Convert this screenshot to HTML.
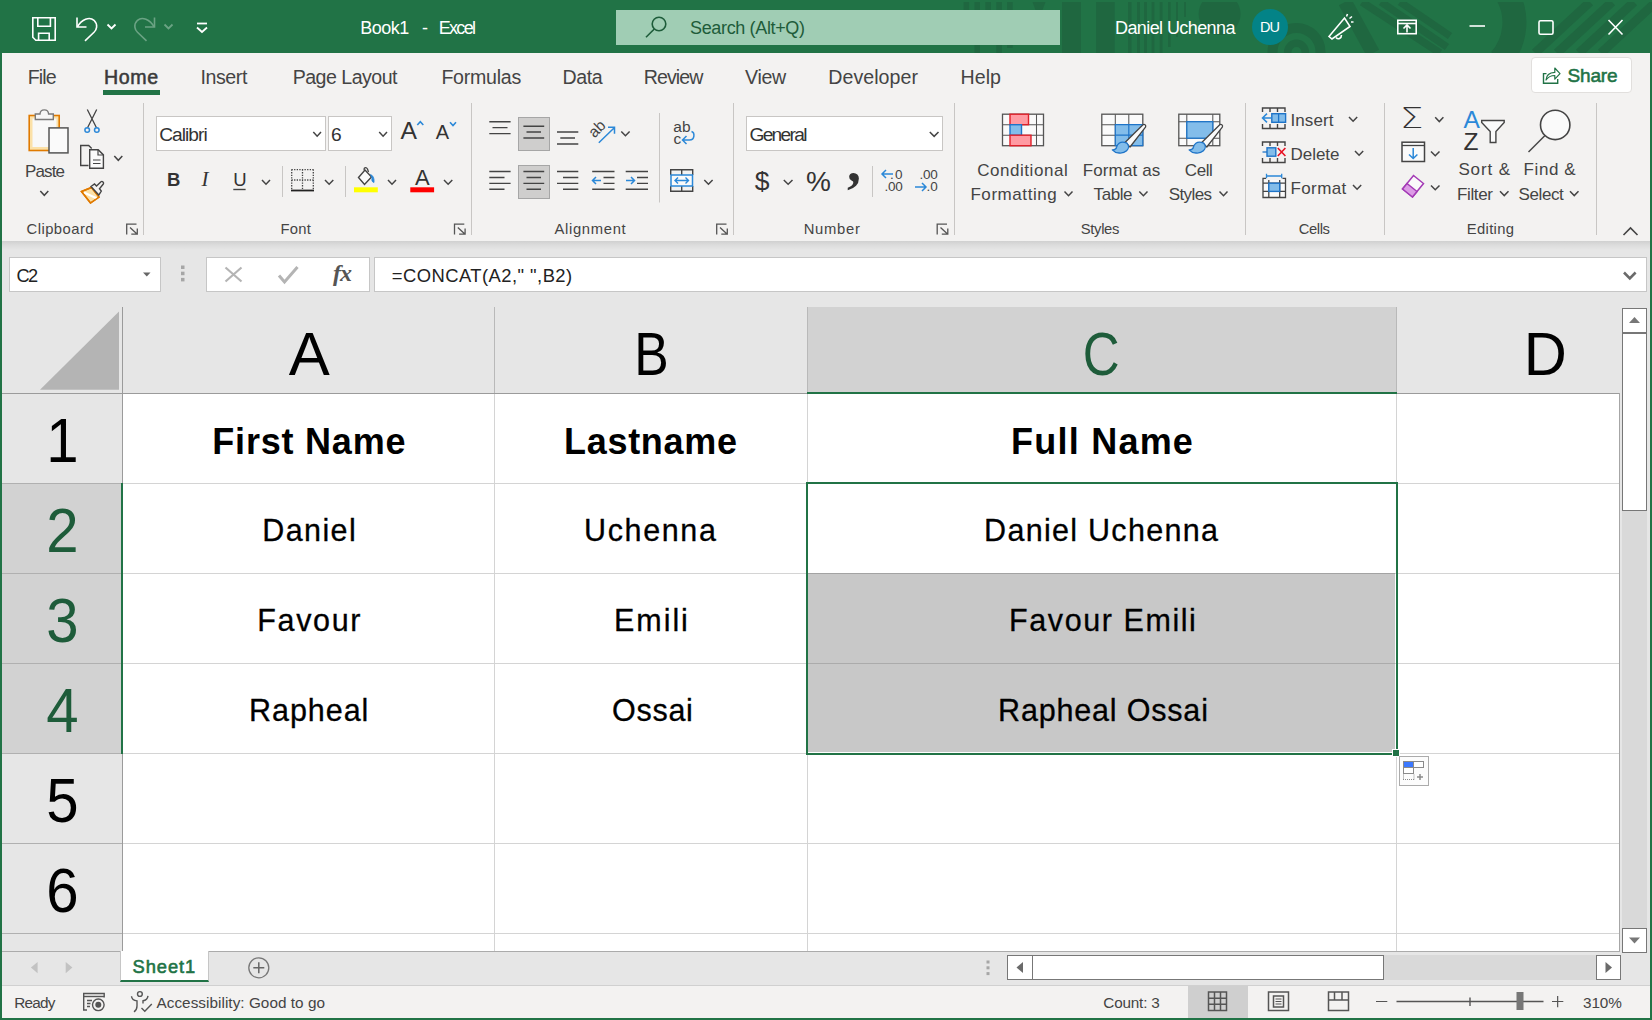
<!DOCTYPE html>
<html><head><meta charset="utf-8"><title>Book1 - Excel</title>
<style>
*{box-sizing:border-box;margin:0;padding:0}
html,body{width:1652px;height:1020px;overflow:hidden;background:#fff}
body{font-family:"Liberation Sans",sans-serif;color:#444;position:relative}
.abs,#app *{position:absolute}
#app{position:absolute;left:0;top:0;width:1652px;height:1020px;background:#217346;overflow:hidden}
.t{white-space:nowrap;line-height:1}
svg{overflow:visible}
/* title bar */
#title{left:0;top:0;width:1652px;height:53px;background:#217346}
#search{left:616px;top:10px;width:444px;height:35px;background:#a0cdb4}
/* tabs + ribbon */
#ribbon{left:2px;top:53px;width:1648px;height:188px;background:#f3f2f1}
#shadow{left:2px;top:241px;width:1648px;height:9px;background:linear-gradient(#d0d0d0,#dcdcdc 45%,#e6e6e6)}
.tab{font-size:19.5px;color:#444;top:24px}
.gl{font-size:15.5px;color:#444;top:170px}
.sep{width:1px;background:#c8c6c4;top:50px;height:132px}
/* formula */
#fbar{left:2px;top:250px;width:1648px;height:58px;background:#e6e6e6}
/* grid */
#grid{left:2px;top:307px;width:1617px;height:644px;background:#fff;overflow:hidden}
.vl{width:1px;background:#d4d4d4;top:0;height:644px}
.hl{height:1px;background:#d4d4d4;left:120px;width:1497px}
.ch{top:0;height:86px;background:#e6e6e6;font-size:57px;color:#000;text-align:center;line-height:92px}
.rh{left:0;width:120px;height:90px;background:#e6e6e6;font-size:57px;color:#000;text-align:center;line-height:96px;border-bottom:1px solid #b0b0b0}
.c{height:90px;text-align:center;font-size:33.5px;color:#000;line-height:94px;white-space:nowrap}
.b{font-weight:bold;font-size:35px}
/* bottom */
#tabs{left:2px;top:951px;width:1648px;height:34px;background:#e6e6e6}
#status{left:2px;top:985px;width:1648px;height:33px;background:#f3f2f1;font-size:16px;color:#444}
</style></head><body>
<div id="app">
<div id="title">
<svg style="left:0;top:0;overflow:hidden" width="1652" height="53" viewBox="0 0 1652 53">
<g fill="#1f6740">
<rect x="963.600" y="2" width="5.500" height="8"/><rect x="974.500" y="2" width="5.500" height="8"/><rect x="985.400" y="2" width="5.500" height="8"/><rect x="996.300" y="2" width="5.500" height="8"/><rect x="1007.200" y="2" width="5.500" height="8"/>
<path d="M1032.500 2h13l-3 8h-7z"/>
<rect x="974.500" y="45" width="5.500" height="8"/><rect x="996.300" y="45" width="5.500" height="8"/><rect x="1007.200" y="45" width="5.500" height="3"/>
<rect x="1062" y="2" width="19" height="51"/>
<rect x="1096.200" y="2" width="18.500" height="51"/>
<rect x="1128" y="2" width="3.500" height="51"/><rect x="1137" y="2" width="3" height="51"/><rect x="1144" y="2" width="3" height="51"/><rect x="1151.600" y="2" width="2.800" height="51"/><rect x="1159.700" y="2" width="2.800" height="51"/><rect x="1168" y="2" width="2.600" height="45"/><rect x="1176" y="2" width="2" height="35"/><rect x="1184.200" y="2" width="1.800" height="15"/>
<circle cx="1219.600" cy="14" r="21"/>
</g>
<g fill="none" stroke="#1f6740">
<circle cx="1296.500" cy="52" r="8.800" stroke-width="7.500"/>
<circle cx="1296.500" cy="52" r="24" stroke-width="10"/>
<path d="M1506.800 -6A56.400 56.400 0 0 1 1500 60" stroke-width="24"/>
<path d="M1345 2l28 51" stroke-width="14"/>
<path d="M1362 2l78 51M1381 2l66 45M1400 2l50 34" stroke-width="7.500"/>
<path d="M1590 2l-55 51M1612 2l-55 51M1634 2l-55 51M1656 2l-55 51" stroke-width="9"/>
</g>
<rect x="0" y="0" width="1652" height="2" fill="#217346"/>
<!-- qat icons -->
<g fill="none" stroke="#fff" stroke-width="1.6">
<path d="M32.8 17.8h22.4v22.4h-19.4l-3-3z"/><path d="M37.8 17.8v8.4h12.6v-8.4M38.6 40v-6.8h10.6v6.8"/>
<path d="M77 17.5v9.5h9.5"/><path d="M77.5 26.8c4-7.5 12-10.5 16.500-6.500 4.500 4.500 2.500 9.500 0 12l-9 8.500"/>
<path d="M107.500 24.500l4 4 4-4" stroke-width="1.800"/>
<path d="M197 23.500h10" stroke-width="1.800"/><path d="M197 27.500l5 4.500 5-4.500" stroke-width="1.800"/>
</g>
<g fill="none" stroke="#6ba384" stroke-width="1.6">
<path d="M154.500 17.500v9.500h-9.500"/><path d="M154 26.800c-4-7.500-12-10.500-16.500-6.500-4.500 4.500-2.500 9.500 0 12l9 8.500"/>
<path d="M164.500 24.500l4 4 4-4" stroke-width="1.800"/>
</g>
<!-- search -->
<rect x="616" y="10" width="444" height="35" fill="#a0cdb4"/>
<g fill="none" stroke="#1e5c3a" stroke-width="1.6"><circle cx="659" cy="24" r="6.800"/><path d="M654.300 29l-8.300 8.300"/></g>
<!-- avatar -->
<circle cx="1270" cy="27" r="18" fill="#038387"/>
<!-- window icons -->
<g fill="none" stroke="#fff" stroke-width="1.600">
<path d="M1329 36.500l15.500-18.500 5.500 8.500-18 12.500z"/><path d="M1336 37.500c2 2.500 5.500 1 5.500-2.500"/><path d="M1346.500 16.500l1-2.500M1349.500 18.500l2.500-2M1351 22h2.500"/>
<rect x="1397.800" y="20.300" width="18.400" height="13.400"/><path d="M1397.800 23.500h18.400" /><path d="M1407 32.500v-7M1403.500 28.500l3.500-3.500 3.500 3.500"/>
<path d="M1469.500 26h15.500"/>
<rect x="1539" y="20.800" width="14" height="13.400" rx="1.500"/>
<path d="M1608.500 20l14 14.500M1622.500 20l-14 14.500"/>
</g>
</svg>
<div class="t" style="left:360.30px;top:19.00px;font-size:18px;color:#fff;letter-spacing:-0.533px;">Book1</div>
<div class="t" style="left:421.90px;top:19.00px;font-size:18px;color:#fff;">-</div>
<div class="t" style="left:438.70px;top:19.00px;font-size:18px;color:#fff;letter-spacing:-1.677px;">Excel</div>
<div class="t" style="left:690.00px;top:19.00px;font-size:18px;color:#1e5c3a;letter-spacing:-0.349px;">Search (Alt+Q)</div>
<div class="t" style="left:1115.00px;top:19.00px;font-size:18px;color:#fff;letter-spacing:-0.585px;">Daniel Uchenna</div>
<div class="t" style="left:1260.00px;top:20.00px;font-size:14.5px;color:#fff;letter-spacing:-0.938px;">DU</div>
</div>
<div id="ribbon"></div>
<div id="shadow"></div>
<div style="left:1531px;top:57px;width:101px;height:36px;background:#fff;border:1px solid #e1dfdd;border-radius:4px"></div>
<div style="left:103px;top:90px;width:57px;height:5px;background:#217346"></div>
<div class="t" style="left:27.70px;top:68.00px;font-size:19.6px;color:#444;letter-spacing:-0.859px;">File</div>
<div class="t" style="left:200.50px;top:68.00px;font-size:19.6px;color:#444;letter-spacing:-0.424px;">Insert</div>
<div class="t" style="left:292.70px;top:68.00px;font-size:19.6px;color:#444;letter-spacing:-0.527px;">Page Layout</div>
<div class="t" style="left:441.40px;top:68.00px;font-size:19.6px;color:#444;letter-spacing:-0.256px;">Formulas</div>
<div class="t" style="left:562.60px;top:68.00px;font-size:19.6px;color:#444;letter-spacing:-0.405px;">Data</div>
<div class="t" style="left:643.70px;top:68.00px;font-size:19.6px;color:#444;letter-spacing:-0.925px;">Review</div>
<div class="t" style="left:745.00px;top:68.00px;font-size:19.6px;color:#444;letter-spacing:-0.293px;">View</div>
<div class="t" style="left:828.30px;top:68.00px;font-size:19.6px;color:#444;letter-spacing:0.045px;">Developer</div>
<div class="t" style="left:960.40px;top:68.00px;font-size:19.6px;color:#444;letter-spacing:0.094px;">Help</div>
<div class="t" style="left:103.90px;top:68.00px;font-size:19.6px;color:#3a3a3a;letter-spacing:0.702px;-webkit-text-stroke:0.55px #3a3a3a;">Home</div>
<div class="t" style="left:1567.50px;top:66.00px;font-size:19px;color:#217346;letter-spacing:-0.173px;-webkit-text-stroke:0.55px #217346;">Share</div>
<div style="left:143px;top:103px;width:1px;height:132px;background:#c8c6c4"></div>
<div style="left:471px;top:103px;width:1px;height:132px;background:#c8c6c4"></div>
<div style="left:733px;top:103px;width:1px;height:132px;background:#c8c6c4"></div>
<div style="left:954px;top:103px;width:1px;height:132px;background:#c8c6c4"></div>
<div style="left:1245px;top:103px;width:1px;height:132px;background:#c8c6c4"></div>
<div style="left:1384px;top:103px;width:1px;height:132px;background:#c8c6c4"></div>
<div style="left:1596px;top:103px;width:1px;height:132px;background:#c8c6c4"></div>
<div class="t" style="left:26.60px;top:222.00px;font-size:14.8px;color:#444;letter-spacing:0.445px;">Clipboard</div>
<div class="t" style="left:280.40px;top:222.00px;font-size:14.8px;color:#444;letter-spacing:0.328px;">Font</div>
<div class="t" style="left:554.50px;top:222.00px;font-size:14.8px;color:#444;letter-spacing:0.673px;">Alignment</div>
<div class="t" style="left:803.70px;top:222.00px;font-size:14.8px;color:#444;letter-spacing:0.731px;">Number</div>
<div class="t" style="left:1080.80px;top:222.00px;font-size:14.8px;color:#444;letter-spacing:-0.340px;">Styles</div>
<div class="t" style="left:1298.70px;top:222.00px;font-size:14.8px;color:#444;letter-spacing:-0.400px;">Cells</div>
<div class="t" style="left:1466.80px;top:222.00px;font-size:14.8px;color:#444;letter-spacing:0.324px;">Editing</div>
<div style="left:156px;top:116px;width:170px;height:35px;background:#fff;border:1px solid #c8c6c4"></div>
<div style="left:328px;top:116px;width:64px;height:35px;background:#fff;border:1px solid #c8c6c4"></div>
<div style="left:746px;top:116px;width:197px;height:35px;background:#fff;border:1px solid #c8c6c4"></div>
<div class="t" style="left:159.20px;top:125.00px;font-size:19.2px;color:#333;letter-spacing:-0.985px;">Calibri</div>
<div class="t" style="left:331.00px;top:125.00px;font-size:19.2px;color:#333;">6</div>
<div class="t" style="left:749.40px;top:125.00px;font-size:19.2px;color:#333;letter-spacing:-1.686px;">General</div>
<div style="left:518px;top:117px;width:32px;height:34px;background:#cfcecd;border:1px solid #a6a6a6"></div>
<div style="left:518px;top:165px;width:32px;height:34px;background:#cfcecd;border:1px solid #a6a6a6"></div>
<div class="t" style="left:25.00px;top:163.00px;font-size:17px;color:#444;letter-spacing:-0.867px;">Paste</div>
<div class="t" style="left:977.20px;top:162.00px;font-size:17px;color:#444;letter-spacing:0.545px;">Conditional</div>
<div class="t" style="left:970.40px;top:186.00px;font-size:17px;color:#444;letter-spacing:0.573px;">Formatting</div>
<div class="t" style="left:1082.70px;top:162.00px;font-size:17px;color:#444;letter-spacing:0.135px;">Format as</div>
<div class="t" style="left:1093.60px;top:186.00px;font-size:17px;color:#444;letter-spacing:-0.437px;">Table</div>
<div class="t" style="left:1184.80px;top:162.00px;font-size:17px;color:#444;letter-spacing:-0.397px;">Cell</div>
<div class="t" style="left:1168.70px;top:186.00px;font-size:17px;color:#444;letter-spacing:-0.598px;">Styles</div>
<div class="t" style="left:1290.50px;top:112.00px;font-size:17px;color:#444;letter-spacing:0.097px;">Insert</div>
<div class="t" style="left:1290.50px;top:146.00px;font-size:17px;color:#444;letter-spacing:-0.029px;">Delete</div>
<div class="t" style="left:1290.50px;top:180.00px;font-size:17px;color:#444;letter-spacing:0.392px;">Format</div>
<div class="t" style="left:1458.40px;top:161.00px;font-size:17px;color:#444;letter-spacing:0.871px;">Sort &amp;</div>
<div class="t" style="left:1457.00px;top:186.00px;font-size:17px;color:#444;letter-spacing:-0.355px;">Filter</div>
<div class="t" style="left:1523.60px;top:161.00px;font-size:17px;color:#444;letter-spacing:0.594px;">Find &amp;</div>
<div class="t" style="left:1518.50px;top:186.00px;font-size:17px;color:#444;letter-spacing:-0.389px;">Select</div>
<div class="t" style="left:167.00px;top:171.00px;font-size:18.5px;color:#333;font-weight:bold;">B</div>
<div class="t" style="left:201.5px;top:168.5px;font-size:21px;color:#333;font-style:italic;font-family:'Liberation Serif',serif">I</div>
<div class="t" style="left:233.30px;top:171.00px;font-size:18.5px;color:#333;">U</div>
<div class="t" style="left:400.40px;top:119.00px;font-size:24.7px;color:#333;">A</div>
<div class="t" style="left:435.80px;top:122.00px;font-size:20px;color:#333;">A</div>
<div class="t" style="left:415.00px;top:167.00px;font-size:22px;color:#333;">A</div>
<div class="t" style="left:754.80px;top:168.00px;font-size:26.5px;color:#333;">$</div>
<div class="t" style="left:806.00px;top:168.00px;font-size:28px;color:#333;">%</div>
<div class="t" style="left:847px;top:133.5px;font-size:56px;color:#333;font-weight:bold;font-family:'Liberation Serif',serif">,</div>
<div class="t" style="left:1463.50px;top:108.00px;font-size:24.5px;color:#2b88d8;">A</div>
<div class="t" style="left:1463.50px;top:130.00px;font-size:24.5px;color:#333;">Z</div>
<div class="t" style="left:1400px;top:104px;font-size:29px;color:#333;font-family:'DejaVu Sans Light','DejaVu Sans','Liberation Sans',sans-serif;font-weight:200;transform:scaleX(1.28);transform-origin:0 0">Σ</div>
<svg style="left:0;top:0" width="1652" height="250" viewBox="0 0 1652 250">
<g fill="none" stroke="#217346" stroke-width="1.400"><path d="M1546.500 73.600h-3v9.700h14.200v-4.300"/><path d="M1546 80c0.300-4.800 3.600-7.400 8.800-7.600v-4.400l5.200 5.600-5.200 5.600v-3.700c-3.800 0-6.600 1.200-8.800 4.500z" stroke-width="1.200" stroke-linejoin="round"/></g>
<rect x="29.200" y="115.500" width="30" height="35" fill="#fbe1a8" stroke="#e07a00" stroke-width="1.600"/>
<rect x="32.500" y="118.500" width="24" height="28.500" fill="#f8f8f8"/>
<path d="M35.300 119.500v-5.500h4.700c0.300-5.500 8.300-5.500 8.600 0h4.700v5.500z" fill="#f6f6f6" stroke="#7a7a7a" stroke-width="1.400"/>
<rect x="49" y="127.900" width="19" height="25" fill="#fafafa" stroke="#555" stroke-width="1.500"/>
<path d="M40.3 191L44.3 195.3L48.3 191" fill="none" stroke="#444" stroke-width="1.5"/>
<path d="M87.300 109.500l9.300 18.500M96.700 109.500l-9.300 18.500" stroke="#444" stroke-width="1.300" fill="none"/>
<circle cx="87.200" cy="130" r="2.300" fill="none" stroke="#2b88d8" stroke-width="1.500"/><circle cx="96.800" cy="130" r="2.300" fill="none" stroke="#2b88d8" stroke-width="1.500"/>
<path d="M88.500 165.500h-7.800v-20h8l3 3" fill="none" stroke="#444" stroke-width="1.400"/>
<path d="M89.700 149.700h8.500l5.200 5.200v13.300h-13.700z" fill="#fafafa" stroke="#444" stroke-width="1.400"/><path d="M98 150v5h5" fill="none" stroke="#444" stroke-width="1.200"/><path d="M93 160h7.500M93 163.500h7.500" stroke="#444" stroke-width="1.200"/>
<path d="M114.3 156L118.3 160.3L122.3 156" fill="none" stroke="#444" stroke-width="1.5"/>
<path d="M81.500 191.500l10-4 7.500 9.500-8.500 6z" fill="#fbe1a8" stroke="#e07a00" stroke-width="1.500"/><path d="M84 192.500l13 6" stroke="#fff" stroke-width="2"/><path d="M81.500 191.500l10-4 7.500 9.500-8.500 6z" fill="none" stroke="#e07a00" stroke-width="1.500"/>
<path d="M91 186.500l3.500-2.500 2 2 4.500-4.300c1.300-1 3.300 1 2.300 2.300l-3.800 4.700 1.800 2.300-2.500 4z" fill="#f3f2f1" stroke="#444" stroke-width="1.400"/>
<path d="M126.7 234.4V224.1H136.5" fill="none" stroke="#555" stroke-width="1.3"/><path d="M130 227.4L137.3 234.20000000000002M137.3 228.4V234.20000000000002H131.3" fill="none" stroke="#555" stroke-width="1.3"/>
<path d="M313.3 132L317.15 136.2L321 132" fill="none" stroke="#444" stroke-width="1.5"/>
<path d="M379.2 132L383.1 136.2L387 132" fill="none" stroke="#444" stroke-width="1.5"/>
<path d="M417.300 125l3-3.300 3 3.300" fill="none" stroke="#2b88d8" stroke-width="1.600"/><path d="M450 122.300l3 3.300 3-3.300" fill="none" stroke="#2b88d8" stroke-width="1.600"/>
<path d="M233.300 189.500h12.300" stroke="#444" stroke-width="1.400"/>
<path d="M262 180L266.0 184.2L270 180" fill="none" stroke="#444" stroke-width="1.5"/>
<path d="M282.500 166v31M345.500 166v31" stroke="#c8c6c4"/>
<g stroke="#444" stroke-width="1.300" stroke-dasharray="1.300 1.300" fill="none"><path d="M291.500 169.700h22M291.700 169.500v20M313.300 169.500v20M302.500 169.500v20M291.500 180h22"/></g><path d="M291 190.500h23" stroke="#222" stroke-width="1.800"/>
<path d="M325 180L329.15 184.2L333.3 180" fill="none" stroke="#444" stroke-width="1.5"/>
<rect x="354" y="187.300" width="23.800" height="5" fill="#ffff00"/>
<path d="M358.500 177.500l6.500-7.500 6.500 7-7 7.500z" fill="#fafafa" stroke="#444" stroke-width="1.400"/><path d="M364.500 170.500c-1.500-2.500 1.500-4 3-1.500l1 3" fill="none" stroke="#444" stroke-width="1.300"/>
<path d="M370.500 174.500c2.500 1 4 3.500 3.500 8-2-0.500-2.500-2-2-4.500z" fill="#2b88d8" stroke="#2b88d8" stroke-width="0.800"/>
<path d="M388 180L392.0 184.2L396 180" fill="none" stroke="#444" stroke-width="1.5"/>
<rect x="410.300" y="187.300" width="23.800" height="5" fill="#ff0000"/>
<path d="M444 180L448.15 184.2L452.3 180" fill="none" stroke="#444" stroke-width="1.5"/>
<path d="M454.5 234.4V224.1H464.3" fill="none" stroke="#555" stroke-width="1.3"/><path d="M457.8 227.4L465.1 234.20000000000002M465.1 228.4V234.20000000000002H459.1" fill="none" stroke="#555" stroke-width="1.3"/>
<path d="M489.3 121.7H510.6M492.5 127.6H507.5M489.3 133.6H510.6" stroke="#444" stroke-width="1.4" fill="none"/>
<path d="M523.4 126.2H544.2M526.5 132H541M523.4 138H544.2" stroke="#444" stroke-width="1.4" fill="none"/>
<path d="M557 132H578.3M560.3 138H575M557 144H578.3" stroke="#444" stroke-width="1.4" fill="none"/>
<path d="M598.800 142.800l15.500-15M608 127.300h6.500v6.500" fill="none" stroke="#2b88d8" stroke-width="1.500"/>
<text x="0" y="0" transform="translate(594.500 138.500) rotate(-45)" font-size="15.500" fill="#444" font-family="Liberation Sans, sans-serif">ab</text>
<path d="M621.3 131.5L625.45 135.7L629.6 131.5" fill="none" stroke="#444" stroke-width="1.5"/>
<path d="M659.500 113v89.500M872.500 166v31" stroke="#c8c6c4"/>
<text x="673.300" y="132.300" font-size="15.500" fill="#444" font-family="Liberation Sans, sans-serif">ab</text><text x="673.600" y="144" font-size="15.500" fill="#444" font-family="Liberation Sans, sans-serif">c</text>
<path d="M691.500 131.500c3.500 1 3.500 8.500-2 8.500h-6.500M686.500 136l-4 4 4 4" fill="none" stroke="#2b88d8" stroke-width="1.500"/>
<path d="M489.3 171.5H510.6M489.3 177.5H504.5M489.3 183.4H510.6M489.3 189.3H504.5" stroke="#444" stroke-width="1.4" fill="none"/>
<path d="M523.4 171.5H544.2M526.5 177.5H541M523.4 183.4H544.2M526.5 189.3H541" stroke="#444" stroke-width="1.4" fill="none"/>
<path d="M557 171.5H578.3M563 177.5H578.3M557 183.4H578.3M563 189.3H578.3" stroke="#444" stroke-width="1.4" fill="none"/>
<path d="M592.2 171.5H614.5M603.5 177.5H614.5M603.5 183.4H614.5M592.2 189.3H614.5" stroke="#444" stroke-width="1.4" fill="none"/>
<path d="M601 180.500h-8.500M596 177l-3.500 3.500 3.500 3.500" fill="none" stroke="#2b88d8" stroke-width="1.500"/>
<path d="M625.7 171.5H648M637 177.5H648M637 183.4H648M625.7 189.3H648" stroke="#444" stroke-width="1.4" fill="none"/>
<path d="M626 180.500h8.500M631 177l3.500 3.500-3.500 3.500" fill="none" stroke="#2b88d8" stroke-width="1.500"/>
<path d="M670.700 175v-5.300h22v5.300M670.700 186v5.300h22v-5.300M681.700 169.700v5.300M681.700 186v5.300" fill="none" stroke="#444" stroke-width="1.400"/>
<rect x="671" y="175" width="21.500" height="11" fill="#fafafa" stroke="#2b88d8" stroke-width="1.500"/><path d="M675 180.500h13.500M678 177.500l-3 3 3 3M685.500 177.500l3 3-3 3" fill="none" stroke="#2b88d8" stroke-width="1.400"/>
<path d="M704.3 180L708.45 184.2L712.6 180" fill="none" stroke="#444" stroke-width="1.5"/>
<path d="M716.7 234.4V224.1H726.5" fill="none" stroke="#555" stroke-width="1.3"/><path d="M720 227.4L727.3 234.20000000000002M727.3 228.4V234.20000000000002H721.3" fill="none" stroke="#555" stroke-width="1.3"/>
<path d="M929.8 132L934.15 136.4L938.5 132" fill="none" stroke="#444" stroke-width="1.5"/>
<path d="M783.8 180L788.15 184.2L792.5 180" fill="none" stroke="#444" stroke-width="1.5"/>
<path d="M893 174h-11M886 170l-4 4 4 4" fill="none" stroke="#2b88d8" stroke-width="1.500"/>
<text x="895" y="178.800" font-size="13.500" fill="#444" font-family="Liberation Sans, sans-serif">0</text><text x="884.500" y="190.800" font-size="13.500" fill="#444" font-family="Liberation Sans, sans-serif" letter-spacing="-0.300">.00</text><text x="890" y="179" font-size="13.500" fill="#444" font-family="Liberation Sans, sans-serif">.</text>
<text x="919.500" y="178.800" font-size="13.500" fill="#444" font-family="Liberation Sans, sans-serif" letter-spacing="-0.300">.00</text><text x="926.500" y="190.800" font-size="13.500" fill="#444" font-family="Liberation Sans, sans-serif">.0</text>
<path d="M915 187h11M922 183l4 4-4 4" fill="none" stroke="#2b88d8" stroke-width="1.500"/>
<path d="M937.2 234.4V224.1H947.0" fill="none" stroke="#555" stroke-width="1.3"/><path d="M940.5 227.4L947.8 234.20000000000002M947.8 228.4V234.20000000000002H941.8" fill="none" stroke="#555" stroke-width="1.3"/>
<rect x="1002.5" y="114.2" width="41" height="31.5" fill="#fafafa" stroke="#555" stroke-width="1.3"/><path d="M1010.5 114.2v31.5M1036.5 114.2v31.5M1002.5 124.7h41M1002.5 135.2h41" stroke="#555" stroke-width="1.04" fill="none"/>
<rect x="1010" y="114.200" width="18.500" height="10.500" fill="#ff9aa2" stroke="#e0202a" stroke-width="1.400"/>
<rect x="1010" y="124.700" width="11.500" height="10.500" fill="#83bdea" stroke="#1e74c8" stroke-width="1.400"/>
<rect x="1010" y="135.200" width="21" height="10.500" fill="#ff9aa2" stroke="#e0202a" stroke-width="1.400"/>
<path d="M1064.5 191.5L1068.5 195.7L1072.5 191.5" fill="none" stroke="#444" stroke-width="1.5"/>
<rect x="1101.8" y="114.2" width="41" height="31.5" fill="#fafafa" stroke="#555" stroke-width="1.3"/><path d="M1115.3 114.2v31.5M1128.8 114.2v31.5M1101.8 124.7h41M1101.8 135.2h41" stroke="#555" stroke-width="1.04" fill="none"/>
<rect x="1115.300" y="124.700" width="27.500" height="21" fill="#83bdea"/><path d="M1128.800 124.700v21M1115.300 135.200h27.500M1115.300 124.700h27.500v21h-27.500z" stroke="#1e74c8" stroke-width="1.200" fill="none"/>
<path d="M1125.2 142.20000000000002L1142.7 125.00000000000001c1.600-1.400 3.800 0.200 2.800 2.200L1130.0 147.0z" fill="#fafafa" stroke="#444" stroke-width="1.300" stroke-linejoin="round"/><path d="M1124.6000000000001 142.4c-4.500-1.200-7.500 1.800-8 4.800-0.400 2-2.200 2.800-4.300 2.600 3 3.600 10.500 4.600 14.300 1 2.600-2.500 2.300-5.600 0.400-7.600z" fill="#83bdea" stroke="#1e74c8" stroke-width="1.300" stroke-linejoin="round"/>
<path d="M1139.3 191.5L1143.4 195.7L1147.5 191.5" fill="none" stroke="#444" stroke-width="1.5"/>
<rect x="1178.8" y="114.2" width="41" height="31.5" fill="#fafafa" stroke="#555" stroke-width="1.3"/><path d="M1186.8 114.2v31.5M1212.8 114.2v31.5M1178.8 121.7h41M1178.8 138.2h41" stroke="#555" stroke-width="1.04" fill="none"/>
<rect x="1186.800" y="121.700" width="26" height="16.500" fill="#83bdea" stroke="#1e74c8" stroke-width="1.300"/>
<path d="M1202.0 142.20000000000002L1219.5 125.00000000000001c1.600-1.400 3.800 0.200 2.800 2.200L1206.8 147.0z" fill="#fafafa" stroke="#444" stroke-width="1.300" stroke-linejoin="round"/><path d="M1201.4 142.4c-4.500-1.200-7.500 1.800-8 4.800-0.400 2-2.200 2.800-4.300 2.600 3 3.600 10.500 4.600 14.300 1 2.600-2.500 2.300-5.600 0.400-7.600z" fill="#83bdea" stroke="#1e74c8" stroke-width="1.300" stroke-linejoin="round"/>
<path d="M1219.5 191.5L1223.5 195.7L1227.5 191.5" fill="none" stroke="#444" stroke-width="1.5"/>
<path d="M1262.5 112V108h22.500v4M1262.5 124v4.500h22.500V124M1270.0 108v4M1277.5 108v4M1270.0 124v4.500M1277.5 124v4.500" fill="none" stroke="#444" stroke-width="1.400"/>
<rect x="1271.800" y="113.700" width="13.800" height="8.600" fill="#83bdea" stroke="#1e74c8" stroke-width="1.400"/><path d="M1278.600 113.700v8.600" stroke="#1e74c8" stroke-width="1.300"/><path d="M1271.800 118h-9M1267 113.600l-4.500 4.400 4.500 4.400" fill="none" stroke="#2b88d8" stroke-width="1.500"/>
<path d="M1349 117L1353.1 121.2L1357.2 117" fill="none" stroke="#444" stroke-width="1.5"/>
<path d="M1262.5 146V142h22.500v4M1262.5 158v4.500h22.500V158M1270.0 142v4M1277.5 142v4M1270.0 158v4.500M1277.5 158v4.500" fill="none" stroke="#444" stroke-width="1.400"/>
<rect x="1267" y="147.800" width="8.800" height="8.400" fill="#83bdea" stroke="#1e74c8" stroke-width="1.400"/><path d="M1262.500 152h4.500" stroke="#1e74c8" stroke-width="1.300"/><path d="M1277.800 148l7.600 8M1285.400 148l-7.600 8" stroke="#e81123" stroke-width="1.600"/>
<path d="M1355 151L1359.1 155.2L1363.2 151" fill="none" stroke="#444" stroke-width="1.5"/>
<path d="M1266.500 173.800v4.400M1281.700 173.800v4.400M1266.500 176h15.200" stroke="#2b88d8" stroke-width="1.300" fill="none"/>
<rect x="1263" y="180" width="22.500" height="17" fill="#fafafa"/><path d="M1266 178.300h-3v19.200h22.500v-19.200h-3M1268.800 180v17.500M1279.700 180v17.500M1263 183.200h22.500M1263 191.400h22.500" fill="none" stroke="#444" stroke-width="1.300"/>
<rect x="1268.800" y="183.200" width="10.900" height="8.200" fill="#83bdea" stroke="#1e74c8" stroke-width="1.400"/>
<path d="M1353 185L1357.1 189.2L1361.2 185" fill="none" stroke="#444" stroke-width="1.5"/>
<path d="M1435.2 117.3L1439.3000000000002 121.6L1443.4 117.3" fill="none" stroke="#444" stroke-width="1.5"/>
<rect x="1402" y="142.200" width="22.500" height="19.300" fill="#fafafa" stroke="#444" stroke-width="1.500"/><path d="M1402 145.500h22.500" stroke="#444" stroke-width="1.300"/><path d="M1413.200 148v10M1409 154.500l4.200 4 4.200-4" fill="none" stroke="#2b88d8" stroke-width="1.500"/>
<path d="M1431 151.5L1435.25 155.8L1439.5 151.5" fill="none" stroke="#444" stroke-width="1.5"/>
<path d="M1402.500 189l11-13.500 10 8-11 13.500z" fill="#fafafa" stroke="#a33ab5" stroke-width="1.500"/><path d="M1402.500 189l4.500-5.500 10 8-4.500 5.500z" fill="#dc9be6" stroke="#a33ab5" stroke-width="1.500"/>
<path d="M1431 185.5L1435.25 189.7L1439.5 185.5" fill="none" stroke="#444" stroke-width="1.5"/>
<path d="M1481.700 120.500h22.500v2l-8.300 9v11h-5.700v-11l-8.500-9z" fill="#fafafa" stroke="#444" stroke-width="1.400"/>
<path d="M1500 191.3L1504.25 195.6L1508.5 191.3" fill="none" stroke="#444" stroke-width="1.5"/>
<circle cx="1555.200" cy="124.900" r="14.700" fill="#fafafa" stroke="#444" stroke-width="1.600"/><path d="M1545 135.500l-16.500 16.500" stroke="#444" stroke-width="1.500"/>
<path d="M1570 191.3L1574.25 195.6L1578.5 191.3" fill="none" stroke="#444" stroke-width="1.5"/>
<path d="M1623.500 235l7-7 7 7" fill="none" stroke="#444" stroke-width="1.600"/>
</svg>
<div id="fbar"></div>
<div style="left:9px;top:257px;width:152px;height:35px;border:1px solid #c6c6c6;background:#fff"></div>
<div style="left:206px;top:257px;width:164px;height:35px;border:1px solid #c6c6c6;background:#fff"></div>
<div style="left:374px;top:257px;width:1273px;height:35px;border:1px solid #c6c6c6;background:#fff"></div>
<div class="t" style="left:16.40px;top:267.00px;font-size:18.2px;color:#222;letter-spacing:-1.460px;">C2</div>
<div class="t" style="left:391.70px;top:267.00px;font-size:18.4px;color:#222;letter-spacing:0.462px;">=CONCAT(A2,&quot; &quot;,B2)</div>
<svg style="left:0;top:0" width="1652" height="320">
<path d="M143 272.500h7.500l-3.750 4z" fill="#666"/>
<g fill="#a6a6a6"><rect x="181" y="265.500" width="3.500" height="3.500"/><rect x="181" y="271.700" width="3.500" height="3.500"/><rect x="181" y="277.900" width="3.500" height="3.500"/></g>
<path d="M225.500 267.500l16 14M241.500 267.500l-16 14" stroke="#b4b4b4" stroke-width="2.200" fill="none"/>
<path d="M279 275.500l5.500 6.500 13-15" stroke="#b4b4b4" stroke-width="3" fill="none"/>
<path d="M1624 272.500l5.800 5.800 5.800-5.800" stroke="#6a6a6a" stroke-width="2.600" fill="none"/>
</svg>
<div class="t" style="left:333px;top:260.500px;font-size:24px;color:#555;font-style:italic;font-weight:bold;font-family:'Liberation Serif',serif;letter-spacing:-1px">fx</div>
<div style="left:2px;top:307px;width:1648px;height:644px;background:#e6e6e6"></div>
<div style="left:123px;top:394px;width:1496px;height:557px;background:#fff"></div>
<div style="left:808px;top:307px;width:588px;height:85px;background:#d2d2d2"></div>
<div style="left:2px;top:484px;width:119px;height:269px;background:#d2d2d2"></div>
<div style="left:808px;top:574px;width:587px;height:178px;background:#c8c8c8"></div>
<div style="left:494px;top:394px;width:1px;height:557px;background:#d4d4d4"></div>
<div style="left:807px;top:394px;width:1px;height:557px;background:#d4d4d4"></div>
<div style="left:1396px;top:394px;width:1px;height:557px;background:#d4d4d4"></div>
<div style="left:123px;top:483px;width:1496px;height:1px;background:#d4d4d4"></div>
<div style="left:123px;top:573px;width:1496px;height:1px;background:#d4d4d4"></div>
<div style="left:123px;top:663px;width:1496px;height:1px;background:#d4d4d4"></div>
<div style="left:123px;top:753px;width:1496px;height:1px;background:#d4d4d4"></div>
<div style="left:123px;top:843px;width:1496px;height:1px;background:#d4d4d4"></div>
<div style="left:123px;top:933px;width:1496px;height:1px;background:#d4d4d4"></div>
<div style="left:808px;top:663px;width:587px;height:1px;background:#ababab"></div>
<div style="left:808px;top:573px;width:587px;height:1px;background:#a3a3a3"></div>
<div style="left:122px;top:307px;width:1px;height:644px;background:#9b9b9b"></div>
<div style="left:2px;top:393px;width:1617px;height:1px;background:#9b9b9b"></div>
<div style="left:494px;top:307px;width:1px;height:86px;background:#b9b9b9"></div>
<div style="left:807px;top:307px;width:1px;height:86px;background:#b9b9b9"></div>
<div style="left:1396px;top:307px;width:1px;height:86px;background:#b9b9b9"></div>
<div style="left:2px;top:483px;width:120px;height:1px;background:#b0b0b0"></div>
<div style="left:2px;top:573px;width:120px;height:1px;background:#b0b0b0"></div>
<div style="left:2px;top:663px;width:120px;height:1px;background:#b0b0b0"></div>
<div style="left:2px;top:753px;width:120px;height:1px;background:#b0b0b0"></div>
<div style="left:2px;top:843px;width:120px;height:1px;background:#b0b0b0"></div>
<div style="left:2px;top:933px;width:120px;height:1px;background:#b0b0b0"></div>
<div style="left:1619px;top:393px;width:1px;height:558px;background:#a6a6a6"></div>
<svg style="left:0;top:0" width="130" height="400"><path d="M40 389.700H119V311.500z" fill="#b4b4b4"/></svg>
<div style="left:807px;top:392px;width:590px;height:2px;background:#217346"></div>
<div style="left:121px;top:483px;width:2px;height:271px;background:#217346"></div>
<div style="left:806px;top:482px;width:592px;height:273px;border:2px solid #217346"></div>
<div style="left:1392px;top:749px;width:8px;height:8px;background:#217346;border:1px solid #fff"></div>
<div class="t" style="left:288.69px;top:323.00px;font-size:61.5px;color:#000;transform:scaleX(1);transform-origin:50% 50%;">A</div>
<div class="t" style="left:631.19px;top:323.00px;font-size:61.5px;color:#000;transform:scaleX(0.84);transform-origin:50% 50%;">B</div>
<div class="t" style="left:1078.80px;top:323.00px;font-size:61.5px;color:#1e5c3a;transform:scaleX(0.83);transform-origin:50% 50%;">C</div>
<div class="t" style="left:1523.10px;top:323.00px;font-size:61.5px;color:#000;transform:scaleX(0.97);transform-origin:50% 50%;">D</div>
<div class="t" style="left:44.92px;top:409.00px;font-size:62.5px;color:#000;transform:scaleX(0.93);transform-origin:50% 50%;">1</div>
<div class="t" style="left:44.92px;top:499.00px;font-size:62.5px;color:#1e5c3a;transform:scaleX(0.93);transform-origin:50% 50%;">2</div>
<div class="t" style="left:44.92px;top:589.00px;font-size:62.5px;color:#1e5c3a;transform:scaleX(0.93);transform-origin:50% 50%;">3</div>
<div class="t" style="left:44.92px;top:679.00px;font-size:62.5px;color:#1e5c3a;transform:scaleX(0.93);transform-origin:50% 50%;">4</div>
<div class="t" style="left:44.92px;top:769.00px;font-size:62.5px;color:#000;transform:scaleX(0.93);transform-origin:50% 50%;">5</div>
<div class="t" style="left:44.92px;top:859.00px;font-size:62.5px;color:#000;transform:scaleX(0.93);transform-origin:50% 50%;">6</div>
<div class="t" style="left:212.30px;top:424.00px;font-size:36px;color:#000;letter-spacing:0.795px;font-weight:bold;">First Name</div>
<div class="t" style="left:262.30px;top:515.00px;font-size:30.5px;color:#000;letter-spacing:1.386px;-webkit-text-stroke:0.3px #000;">Daniel</div>
<div class="t" style="left:257.30px;top:605.00px;font-size:30.5px;color:#000;letter-spacing:1.657px;-webkit-text-stroke:0.3px #000;">Favour</div>
<div class="t" style="left:249.10px;top:695.00px;font-size:30.5px;color:#000;letter-spacing:0.931px;-webkit-text-stroke:0.3px #000;">Rapheal</div>
<div class="t" style="left:564.10px;top:424.00px;font-size:36px;color:#000;letter-spacing:0.679px;font-weight:bold;">Lastname</div>
<div class="t" style="left:584.10px;top:515.00px;font-size:30.5px;color:#000;letter-spacing:1.613px;-webkit-text-stroke:0.3px #000;">Uchenna</div>
<div class="t" style="left:614.10px;top:605.00px;font-size:30.5px;color:#000;letter-spacing:1.927px;-webkit-text-stroke:0.3px #000;">Emili</div>
<div class="t" style="left:612.10px;top:695.00px;font-size:30.5px;color:#000;letter-spacing:0.710px;-webkit-text-stroke:0.3px #000;">Ossai</div>
<div class="t" style="left:1011.10px;top:424.00px;font-size:36px;color:#000;letter-spacing:1.220px;font-weight:bold;">Full Name</div>
<div class="t" style="left:984.10px;top:515.00px;font-size:30.5px;color:#000;letter-spacing:1.287px;-webkit-text-stroke:0.3px #000;">Daniel Uchenna</div>
<div class="t" style="left:1009.10px;top:605.00px;font-size:30.5px;color:#000;letter-spacing:1.574px;-webkit-text-stroke:0.3px #000;">Favour Emili</div>
<div class="t" style="left:998.10px;top:695.00px;font-size:30.5px;color:#000;letter-spacing:0.813px;-webkit-text-stroke:0.3px #000;">Rapheal Ossai</div>
<div style="left:1399px;top:756px;width:30px;height:30px;background:#fcfcfc;border:1px solid #ababab"></div>
<svg style="left:0;top:0" width="1652" height="1020">
<rect x="1403.500" y="761.500" width="10" height="6" fill="#3b78ff" stroke="#8a8a8a"/>
<rect x="1413.500" y="761.500" width="10" height="6" fill="#fff" stroke="#8a8a8a"/>
<rect x="1403.500" y="767.500" width="10" height="6" fill="#fff" stroke="#8a8a8a"/>
<path d="M1403.500 774.500v5M1414 774.500v5M1403 779.500h11.500" fill="none" stroke="#8a8a8a" stroke-dasharray="1 1"/>
<path d="M1417 777h6M1420 774v6" stroke="#8a8a8a" stroke-width="1.500"/>
</svg>
<div id="tabs"></div>
<div id="status"></div>
<div style="left:2px;top:951px;width:1618px;height:1px;background:#ababab"></div>
<div style="left:2px;top:985px;width:1648px;height:1px;background:#d0d0d0"></div>
<div style="left:120px;top:951px;width:89px;height:31px;background:#fff;border-bottom:2px solid #217346;border-left:1px solid #c6c6c6;border-right:1px solid #c6c6c6"></div>
<div class="t" style="left:132.60px;top:958.00px;font-size:18.3px;color:#217346;letter-spacing:0.921px;-webkit-text-stroke:0.6px #217346;">Sheet1</div>
<div style="left:1032px;top:955px;width:564px;height:25px;background:#d9d9d9"></div>
<div style="left:1007px;top:955px;width:26px;height:25px;background:#fff;border:1px solid #777"></div>
<div style="left:1032px;top:955px;width:352px;height:25px;background:#fff;border:1px solid #777"></div>
<div style="left:1596px;top:955px;width:25px;height:25px;background:#fff;border:1px solid #777"></div>
<div style="left:1188px;top:986px;width:60px;height:32px;background:#cfcfcf"></div>
<svg style="left:0;top:0" width="1652" height="1020">
<path d="M37.600 962v11.200l-6.700-5.600z" fill="#c2c2c2"/><path d="M65.700 962v11.200l6.700-5.600z" fill="#c2c2c2"/>
<circle cx="258.800" cy="967.800" r="10" fill="none" stroke="#777" stroke-width="1.300"/>
<path d="M253.300 967.800h11M258.800 962.300v11" stroke="#666" stroke-width="1.500"/>
<g fill="#a6a6a6"><rect x="986.500" y="960.500" width="3" height="3"/><rect x="986.500" y="966.300" width="3" height="3"/><rect x="986.500" y="972.100" width="3" height="3"/></g>
<path d="M1023 962v11l-6.500-5.500z" fill="#6a6a6a"/><path d="M1605.500 962v11l6.500-5.500z" fill="#6a6a6a"/>
<!-- macro icon -->
<g fill="none" stroke="#555" stroke-width="1.400">
<path d="M87 1010h-3.300v-16.500h20.500v4"/><path d="M84 996.500h20"/><path d="M87 1000.500h5M87 1003.500h3.500M87 1006.500h3"/>
<circle cx="98.300" cy="1004.800" r="5.800"/></g><circle cx="98.300" cy="1004.800" r="3" fill="#555"/>
<!-- accessibility -->
<g fill="none" stroke="#555" stroke-width="1.400">
<circle cx="139.900" cy="994" r="2.400"/>
<path d="M131.500 996.300c0.300 3 2.600 4.300 5.500 4.600v5c0 2.600-1 4.600-3 6"/><path d="M148 995.800c-0.400 3-2.400 4.500-5 5v2.700"/>
<path d="M141.500 1008l3.300 3.300 7-7.300"/></g>
<!-- view icons -->
<g fill="none" stroke="#555" stroke-width="1.500">
<rect x="1208.500" y="992" width="18" height="18.500"/><path d="M1214.500 992v18.500M1220.500 992v18.500M1208.500 998.200h18M1208.500 1004.300h18"/>
<rect x="1268.500" y="992" width="20" height="18.500"/><rect x="1273.500" y="996" width="10" height="11"/><path d="M1275.500 999h6M1275.500 1001.500h6M1275.500 1004h6" stroke-width="1"/>
<path d="M1328.500 992v18.500h20v-18.500z"/><path d="M1334.500 992v8h7.500v-8M1328.500 1000h20" />
</g>
<path d="M1376 1001.500h11.300M1552 1001.500h11.300M1557.650 996v11.300" stroke="#555" stroke-width="1.200"/>
<path d="M1396.500 1001.500h147" stroke="#555" stroke-width="1.400"/><path d="M1470 997.500v8.500" stroke="#555" stroke-width="1.400"/>
<rect x="1516.500" y="992" width="7" height="18" fill="#777"/>
</svg>
<div class="t" style="left:14.20px;top:995.00px;font-size:15.3px;color:#444;letter-spacing:-0.758px;">Ready</div>
<div class="t" style="left:156.50px;top:995.00px;font-size:15.3px;color:#444;letter-spacing:0.040px;">Accessibility: Good to go</div>
<div class="t" style="left:1103.30px;top:995.00px;font-size:15.3px;color:#444;letter-spacing:-0.191px;">Count: 3</div>
<div class="t" style="left:1583.00px;top:995.00px;font-size:15.3px;color:#444;letter-spacing:-0.079px;">310%</div>
<div style="left:1622px;top:333px;width:25px;height:596px;background:#d9d9d9"></div>
<div style="left:1622px;top:308px;width:25px;height:25px;background:#fff;border:1px solid #777"></div>
<div style="left:1622px;top:333px;width:25px;height:178px;background:#fff;border:1px solid #777"></div>
<div style="left:1622px;top:928px;width:25px;height:25px;background:#fff;border:1px solid #777"></div>
<svg style="left:0;top:0" width="1652" height="1020"><path d="M1629 323l5.500-6 5.500 6z" fill="#777"/><path d="M1629 937.500l5.500 6 5.500-6z" fill="#777"/></svg>
</div>
</body></html>
